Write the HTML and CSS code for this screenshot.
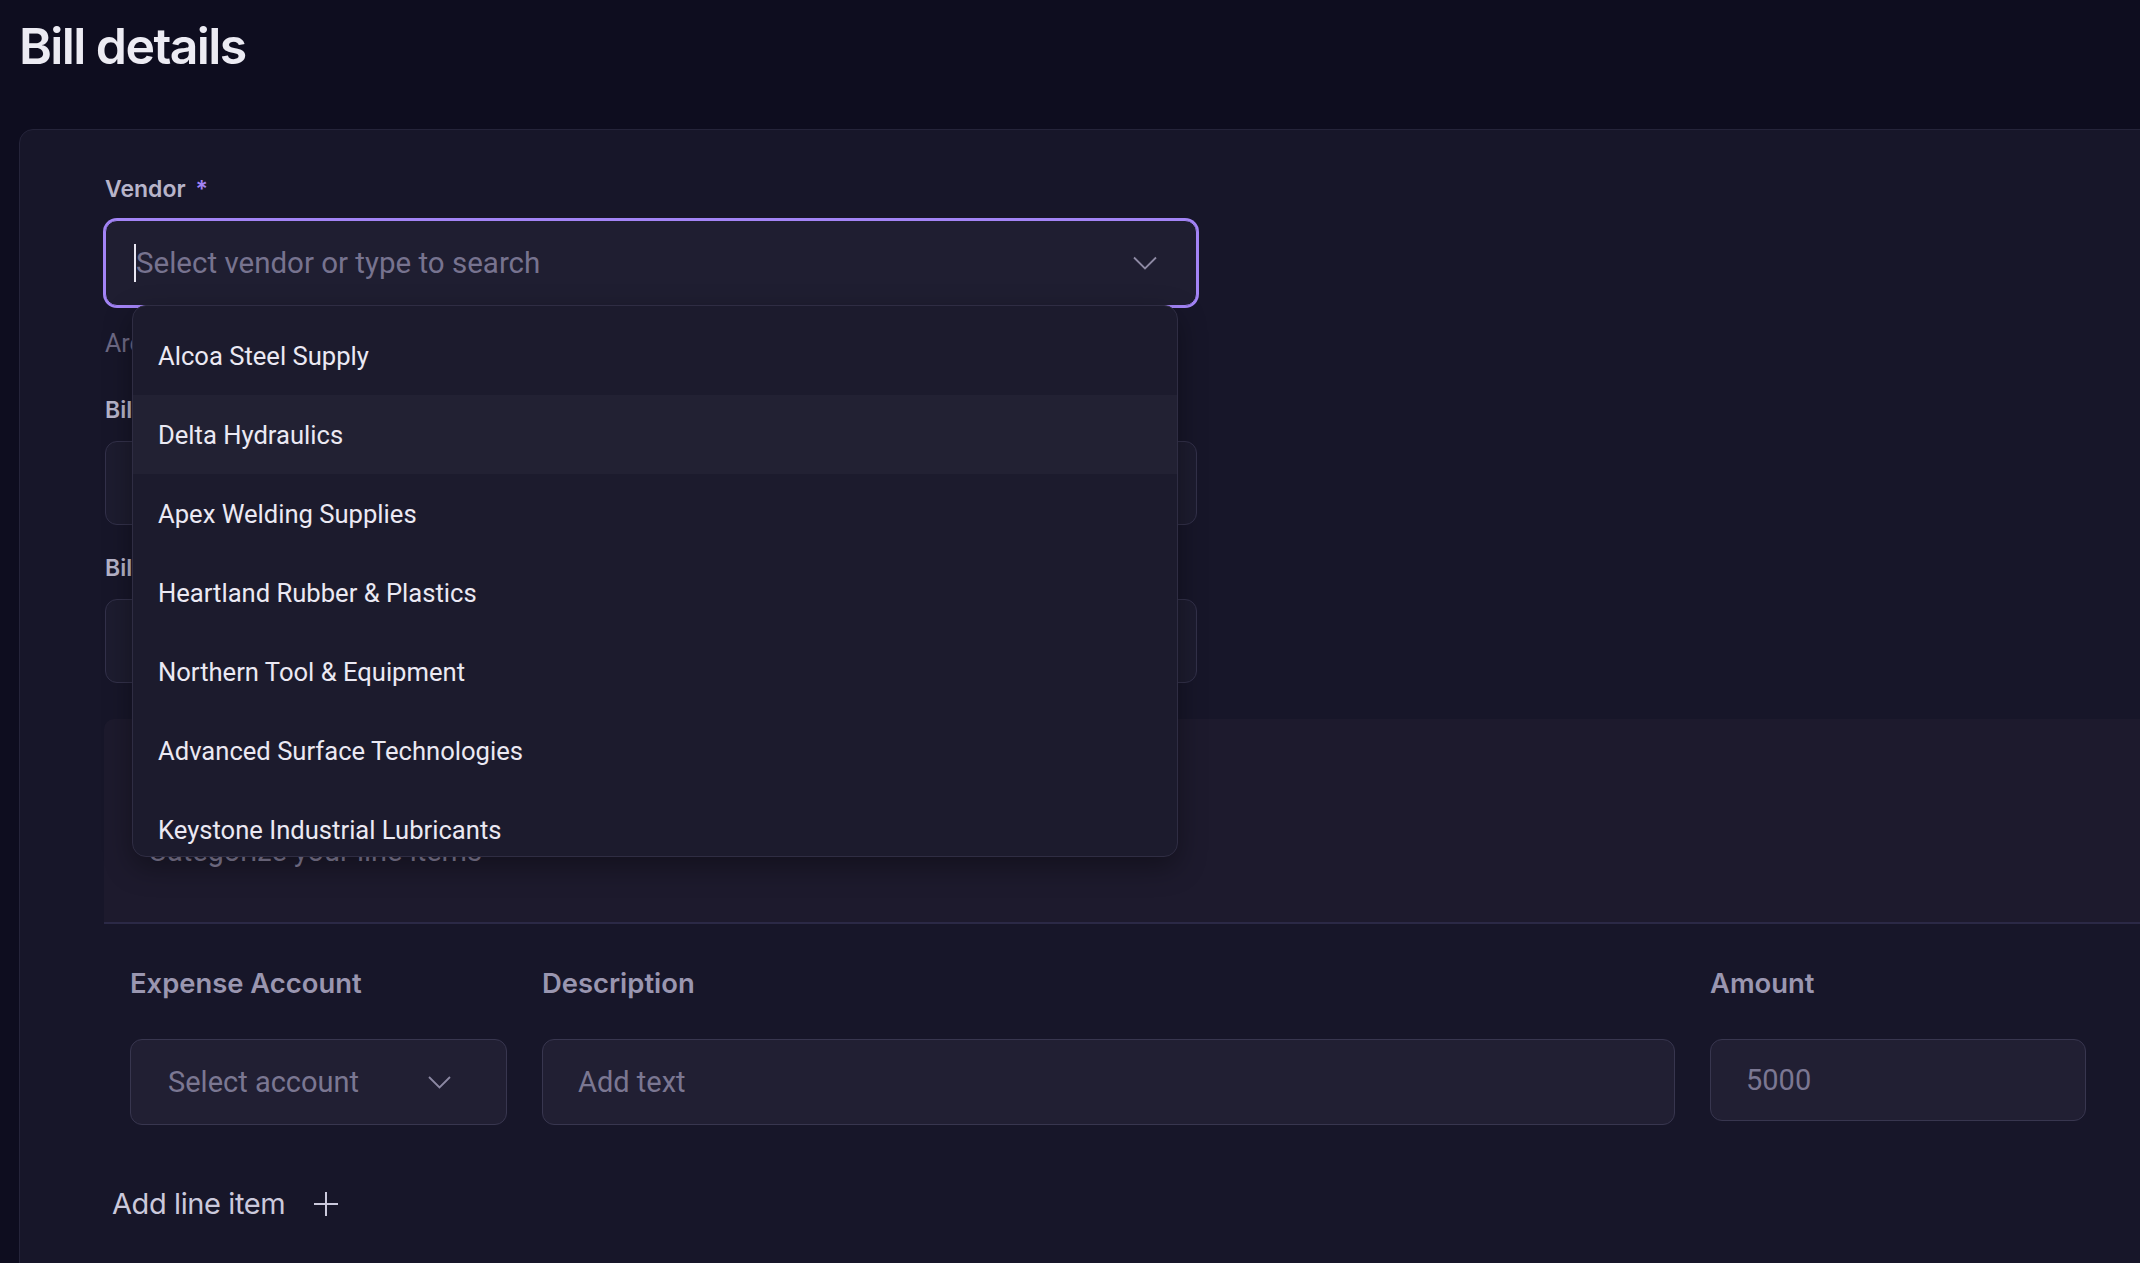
FILE: index.html
```html
<!DOCTYPE html>
<html lang="en">
<head>
    <meta charset="UTF-8">
    <title>Bill details</title>
    <link rel="stylesheet" href="styles.css">
</head>
<body>
    <h1 class="page-title">Bill details</h1>
    <div class="bill-card">
        <div class="field">
            <label class="field-label">Vendor <span class="required">*</span></label>
            <div class="vendor-combo">
                <div class="select-box is-focused">
                    <span class="caret"></span>
                    <span class="placeholder">Select vendor or type to search</span>
                    <svg class="chevron" width="24" height="14" viewBox="0 0 24 14"><path d="M1 1.5 L12 12.5 L23 1.5" fill="none" stroke="currentColor" stroke-width="1.8"/></svg>
                </div>
                <ul class="vendor-menu">
                    <li>Alcoa Steel Supply</li>
                    <li class="is-active">Delta Hydraulics</li>
                    <li>Apex Welding Supplies</li>
                    <li>Heartland Rubber &amp; Plastics</li>
                    <li>Northern Tool &amp; Equipment</li>
                    <li>Advanced Surface Technologies</li>
                    <li>Keystone Industrial Lubricants</li>
                </ul>
            </div>
            <p class="field-hint">Are you missing a vendor? Add it from the vendors page</p>
        </div>
        <div class="field">
            <label class="field-label">Bill number</label>
            <div class="text-box"></div>
        </div>
        <div class="field">
            <label class="field-label">Bill date</label>
            <div class="text-box"></div>
        </div>

        <div class="line-items-head">
            <h2>Line items</h2>
            <p>Categorize your line items</p>
        </div>

        <div class="line-items">
            <div class="col-label">Expense Account</div>
            <div class="col-label">Description</div>
            <div class="col-label">Amount</div>

            <div class="cell-box account-box">
                <span>Select account</span>
                <svg width="23" height="13" viewBox="0 0 23 13"><path d="M1 1 L11.5 11.5 L22 1" fill="none" stroke="currentColor" stroke-width="1.8"/></svg>
            </div>
            <div class="cell-box">Add text</div>
            <div class="cell-box amount-box">5000</div>
        </div>

        <button class="add-line">Add line item
            <svg width="26" height="26" viewBox="0 0 26 26"><path d="M13 1 V25 M1 13 H25" stroke="currentColor" stroke-width="2"/></svg>
        </button>
    </div>
</body>
</html>
```

FILE: styles.css
```css
body {
    margin: 0;
    padding: 0 0 0 19px;
    background: #0e0d1f;
    font-family: Inter, "Liberation Sans", sans-serif;
    overflow: hidden;
}
.page-title {
    margin: 16px 0 53px;
    font-size: 50px;
    line-height: 60px;
    font-weight: 600;
    letter-spacing: -1.6px;
    color: #ecebf3;
}
.bill-card {
    margin-right: -60px;
    padding: 45px 0 120px 85px;
    background: #171629;
    border: 1px solid #25243a;
    border-radius: 14px;
}
.field {
    width: 1092px;
}
.field-label {
    display: block;
    margin-bottom: 17px;
    font-size: 23px;
    line-height: 28px;
    font-weight: 600;
    color: #b7b4c9;
}
.required {
    color: #a283f6;
    margin-left: 4px;
}
.vendor-combo {
    position: relative;
}
.select-box {
    display: flex;
    align-items: center;
    height: 86px;
    box-sizing: border-box;
    padding: 0 39px 0 28px;
    background: #1f1e31;
    border: 1px solid #35334b;
    border-radius: 12px;
}
.select-box.is-focused {
    border-color: #a384f6;
    box-shadow: 0 0 0 2px #a384f6;
}
.caret {
    width: 2px;
    height: 38px;
    background: #e9e7f2;
}
.placeholder {
    flex: 1;
    font-family: Roboto, sans-serif;
    font-size: 29.5px;
    color: #77738f;
}
.chevron {
    color: #8e8aa4;
}
.vendor-menu {
    position: absolute;
    z-index: 5;
    top: calc(100% - 1px);
    left: 27px;
    width: 1046px;
    height: 552px;
    box-sizing: border-box;
    overflow: hidden;
    margin: 0;
    padding: 10px 0 0;
    list-style: none;
    background: #1c1b2d;
    border: 1px solid #2f2d43;
    border-radius: 14px;
    box-shadow: 0 10px 28px rgba(0, 0, 0, 0.35);
}
.vendor-menu li {
    display: flex;
    align-items: center;
    height: 79px;
    padding-left: 25px;
    font-family: Roboto, sans-serif;
    font-size: 25.6px;
    color: #ebe9f3;
}
.vendor-menu li.is-active {
    background: #222133;
}
.field-hint {
    margin: 23px 0 0;
    font-family: Roboto, sans-serif;
    font-size: 25px;
    line-height: 30px;
    color: #6d6984;
}
.field + .field {
    margin-top: 37px;
}
.field + .field + .field {
    margin-top: 29px;
}
.text-box {
    height: 84px;
    box-sizing: border-box;
    background: #1d1c2f;
    border: 1px solid #33314a;
    border-radius: 12px;
}
.line-items-head {
    height: 205px;
    box-sizing: border-box;
    margin: 36px 0 0 -1px;
    padding: 56px 44px 0;
    background: #1d1a2d;
    border-bottom: 2px solid #2b2946;
    border-top-left-radius: 10px;
}
.line-items-head h2 {
    margin: 0 0 19px;
    font-size: 29px;
    line-height: 40px;
    font-weight: 600;
    color: #d9d7e6;
}
.line-items-head p {
    margin: 0;
    font-family: Roboto, sans-serif;
    font-size: 29px;
    line-height: 34px;
    color: #847f9a;
}
.line-items {
    display: grid;
    grid-template-columns: 377px 1133px 376px;
    column-gap: 35px;
    row-gap: 40px;
    align-items: start;
    margin: 43px 0 0 25px;
}
.col-label {
    font-size: 27.4px;
    line-height: 32px;
    font-weight: 600;
    color: #9a96b0;
}
.cell-box {
    display: flex;
    align-items: center;
    justify-content: space-between;
    height: 86px;
    box-sizing: border-box;
    padding: 0 55px 0 35px;
    background: #211f33;
    border: 1px solid #38364f;
    border-radius: 12px;
    font-family: Roboto, sans-serif;
    font-size: 29px;
    color: #7b7792;
}
.account-box {
    padding-left: 37px;
}
.account-box svg {
    color: #8c88a3;
}
.amount-box {
    height: 82px;
}
.add-line {
    display: flex;
    align-items: center;
    gap: 28px;
    margin: 61px 0 0 7px;
    padding: 0;
    background: none;
    border: none;
    font-family: Inter, sans-serif;
    font-size: 29px;
    line-height: 36px;
    letter-spacing: -0.4px;
    color: #cbc9dc;
}
.add-line svg {
    color: #cbc9dc;
}
```
